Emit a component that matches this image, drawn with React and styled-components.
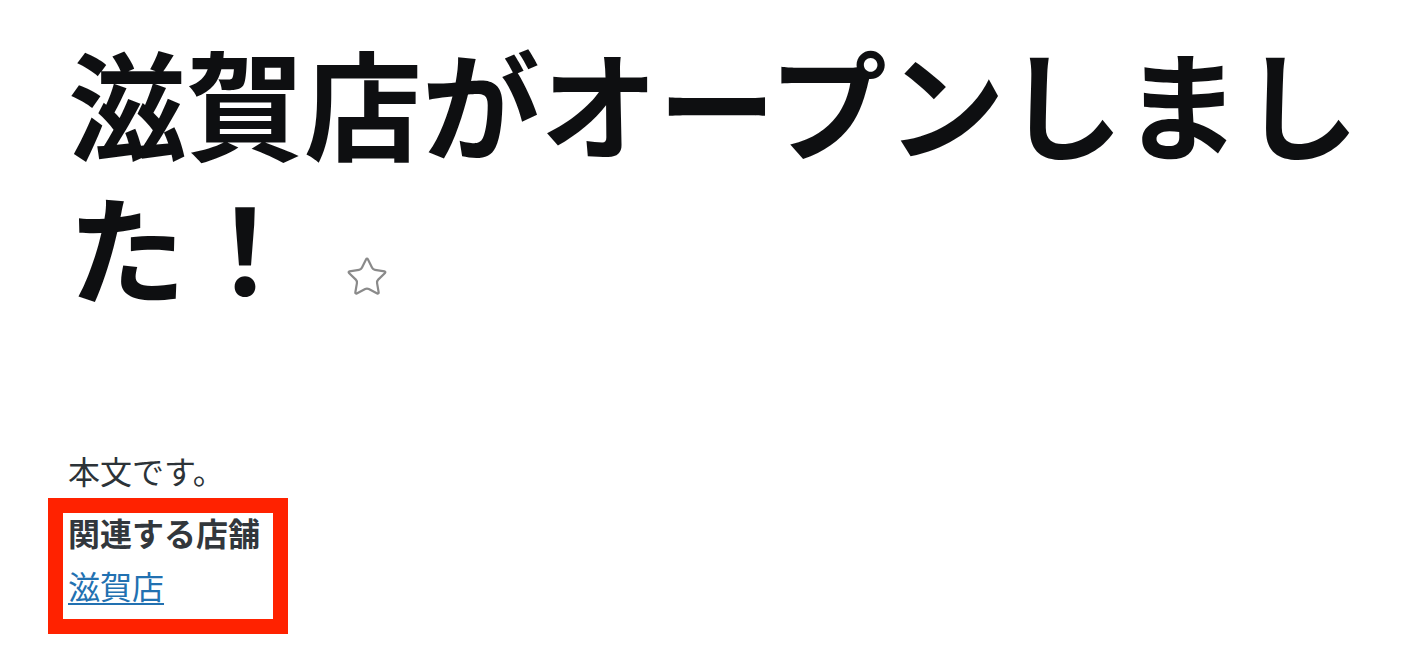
import React from "react"
import styled, { createGlobalStyle } from "styled-components"
import { Star } from "lucide-react"

const GlobalStyle = createGlobalStyle`
  body {
    margin: 0;
    background: #ffffff;
    font-family: "Noto Sans CJK JP", "Noto Sans", sans-serif;
  }
`

const Article = styled.article`
  padding: 29px 30px 0 68px;
`

const Title = styled.h1`
  margin: 0;
  font-size: 118px;
  line-height: 144px;
  font-weight: 700;
  color: #0e0f11;
  letter-spacing: 0;
`

const FavButton = styled.span`
  display: inline-block;
  margin-left: 41px;
  vertical-align: -3px;
  line-height: 0;
  color: #8a8a8a;
`

const Body = styled.p`
  margin: 132px 0 0;
  font-family: "Liberation Serif", "Noto Sans CJK JP", serif;
  font-size: 32px;
  line-height: 48px;
  color: #2c3338;
`

const Related = styled.section`
  display: inline-block;
  margin: 1px 0 0 -20px;
  padding: 1px 13px 14px 5px;
  border: 15px solid #ff2200;
`

const RelatedTitle = styled.h3`
  margin: 0 0 15px;
  font-size: 32px;
  line-height: 36px;
  font-weight: 700;
  color: #32373c;
`

const RelatedLink = styled.a`
  display: inline-block;
  font-size: 32px;
  line-height: 40px;
  color: #2271b1;
  text-decoration: underline;
  text-underline-offset: 4px;
  text-decoration-thickness: 2px;
`

export default function App() {
  return (
    <>
      <GlobalStyle />
      <Article>
        <Title>
          滋賀店がオープンしました！
          <FavButton>
            <Star size={44} strokeWidth={1.2} />
          </FavButton>
        </Title>
        <Body>本文です。</Body>
        <Related>
          <RelatedTitle>関連する店舗</RelatedTitle>
          <RelatedLink href="#">滋賀店</RelatedLink>
        </Related>
      </Article>
    </>
  )
}
